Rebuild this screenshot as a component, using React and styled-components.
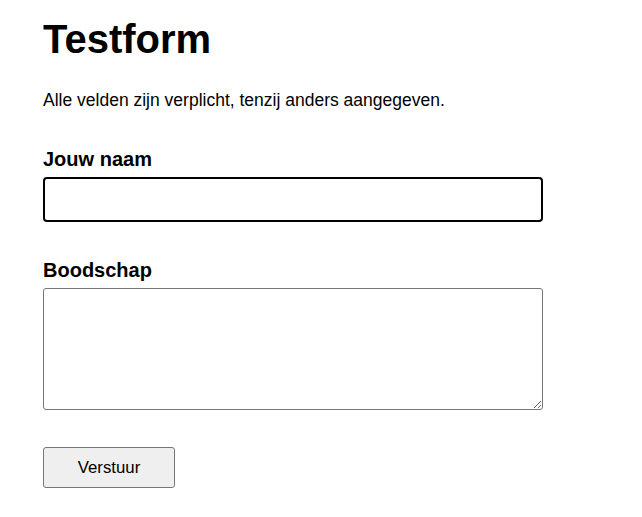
import React from "react";
import styled, { createGlobalStyle } from "styled-components";

const GlobalStyle = createGlobalStyle`
  html, body {
    margin: 0;
    padding: 0;
    background: #ffffff;
  }
  body {
    font-family: "Liberation Sans", Arial, sans-serif;
    color: #000000;
  }
`;

const Page = styled.main`
  display: flex;
  flex-direction: column;
  align-items: flex-start;
  padding: 17px 43px 29px;
`;

const Title = styled.h1`
  margin: 0;
  font-size: 40px;
  font-weight: 700;
  line-height: normal;
`;

const Intro = styled.p`
  margin: 28px 0 0;
  font-size: 17.5px;
  line-height: normal;
`;

const Form = styled.form`
  display: flex;
  flex-direction: column;
  align-items: flex-start;
`;

const Field = styled.div`
  display: flex;
  flex-direction: column;
  gap: 6px;
  margin-top: 37px;
`;

const Label = styled.label`
  font-size: 20px;
  font-weight: 700;
  line-height: normal;
`;

const TextInput = styled.input`
  box-sizing: border-box;
  width: 500px;
  height: 45px;
  margin: 0;
  padding: 4px 8px;
  font: 16px "Liberation Sans", Arial, sans-serif;
  border: 2px solid ${(p) => (p.$active ? "#000000" : "#767676")};
  border-radius: 4px;
  background: #ffffff;
  outline: none;
`;

const TextArea = styled.textarea`
  box-sizing: border-box;
  display: block;
  width: 500px;
  height: 122px;
  margin: 0;
  padding: 4px 8px;
  font: 16px "Liberation Sans", Arial, sans-serif;
  border: 1px solid #767676;
  border-radius: 3px;
  background: #ffffff;
  outline: none;
`;

const SubmitButton = styled.button`
  box-sizing: border-box;
  margin-top: 37px;
  width: 132px;
  height: 41px;
  padding: 0;
  font: 16.8px "Liberation Sans", Arial, sans-serif;
  color: #000000;
  background: #efefef;
  border: 1px solid #767676;
  border-radius: 3px;
`;

export default function App() {
  return (
    <>
      <GlobalStyle />
      <Page>
        <Title>Testform</Title>
        <Intro>Alle velden zijn verplicht, tenzij anders aangegeven.</Intro>
        <Form onSubmit={(e) => e.preventDefault()}>
          <Field>
            <Label htmlFor="naam">Jouw naam</Label>
            <TextInput id="naam" type="text" $active />
          </Field>
          <Field>
            <Label htmlFor="boodschap">Boodschap</Label>
            <TextArea id="boodschap" />
          </Field>
          <SubmitButton type="submit">Verstuur</SubmitButton>
        </Form>
      </Page>
    </>
  );
}
